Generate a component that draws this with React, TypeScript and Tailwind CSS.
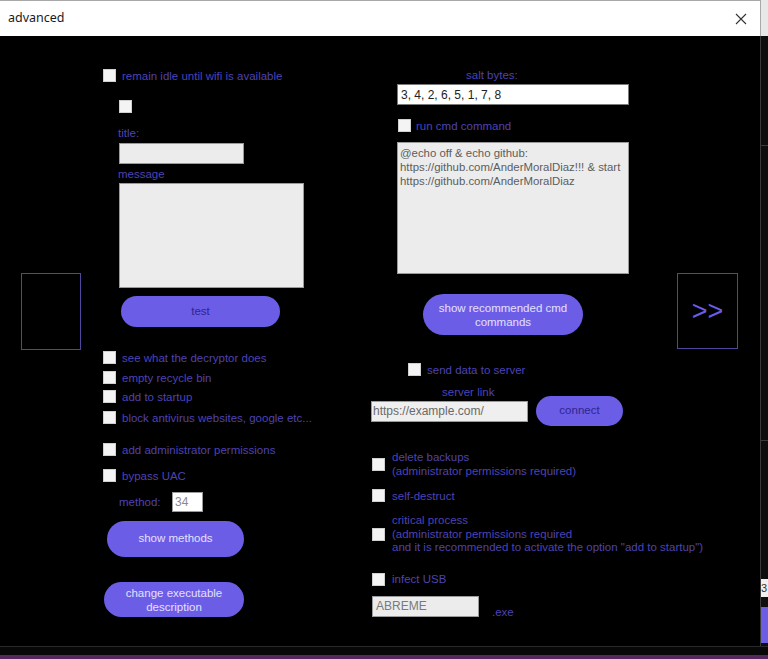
import React from "react";

function Check() {
  return <div className="w-[13px] h-[13px] bg-[#f4f4f4] border border-[#cfcfcf] shrink-0" />;
}

export default function App() {
  return (
    <div className="w-[768px] h-[659px] flex flex-col bg-[#0c0c0c] overflow-hidden font-['Liberation_Sans',Arial,sans-serif] text-[11.5px] text-[#4e43b4]">
      <div className="flex flex-row h-[646px]">
        {/* dialog */}
        <div className="w-[761px] flex flex-col">
          <div className="h-[36px] bg-white border-t border-r border-[#a9a9a9] flex items-center justify-between pl-[8px] pr-[13px]">
            <span className="font-['Noto_Sans',sans-serif] text-[12.5px] text-[#1a1a1a]">advanced</span>
            <svg width="12" height="12" viewBox="0 0 12 12" className="mt-[1px]">
              <path d="M1 1 L11 11 M11 1 L1 11" stroke="#333" strokeWidth="1.1" fill="none" />
            </svg>
          </div>
          <div className="flex-1 bg-black flex flex-row border-r border-[#3a3a3a]">
            {/* col A */}
            <div className="w-[81px] pl-[21px] pt-[237px] shrink-0">
              <div className="w-[60px] h-[77px] border border-[#51459e]" />
            </div>
            {/* col B */}
            <div className="w-[290px] pl-[22px] shrink-0 flex flex-col items-start">
              <div className="mt-[33px] flex items-center gap-[6px] h-[13px]">
                <Check />
                <span className="leading-[14px] whitespace-nowrap">remain idle until wifi is available</span>
              </div>
              <div className="mt-[18px] ml-[16px]">
                <Check />
              </div>
              <div className="mt-[13px] ml-[15px] h-[14px] leading-[14px]">title:</div>
              <div className="mt-[3px] ml-[16px] w-[125px] h-[21px] bg-[#ececec] border border-[#9a9a9a]" />
              <div className="mt-[3px] ml-[15px] h-[14px] leading-[14px]">message</div>
              <div className="mt-[2px] ml-[16px] w-[185px] h-[105px] bg-[#ececec] border border-[#9a9a9a]" />
              <div className="mt-[8px] ml-[18px] w-[159px] h-[31px] rounded-full bg-[#6b5de6] text-[#2f2590] flex items-center justify-center">
                test
              </div>
              <div className="mt-[24px] flex items-center gap-[6px] h-[13px]">
                <Check />
                <span className="leading-[14px] whitespace-nowrap">see what the decryptor does</span>
              </div>
              <div className="mt-[7px] flex items-center gap-[6px] h-[13px]">
                <Check />
                <span className="leading-[14px] whitespace-nowrap">empty recycle bin</span>
              </div>
              <div className="mt-[6px] flex items-center gap-[6px] h-[13px]">
                <Check />
                <span className="leading-[14px] whitespace-nowrap">add to startup</span>
              </div>
              <div className="mt-[8px] flex items-center gap-[6px] h-[13px]">
                <Check />
                <span className="leading-[14px] whitespace-nowrap">block antivirus websites, google etc...</span>
              </div>
              <div className="mt-[19px] flex items-center gap-[6px] h-[13px]">
                <Check />
                <span className="leading-[14px] whitespace-nowrap">add administrator permissions</span>
              </div>
              <div className="mt-[13px] flex items-center gap-[6px] h-[13px]">
                <Check />
                <span className="leading-[14px] whitespace-nowrap">bypass UAC</span>
              </div>
              <div className="mt-[10px] ml-[16px] h-[20px] flex items-center">
                <span className="w-[53px] leading-[14px]">method:</span>
                <div className="w-[31px] h-[20px] bg-white border border-[#9a9a9a] flex items-center pl-[2px] text-[12px] text-[#8a8a8a]">
                  34
                </div>
              </div>
              <div className="mt-[9px] ml-[4px] w-[137px] h-[36px] rounded-full bg-[#6b5de6] text-[#e4e0ff] flex items-center justify-center">
                show methods
              </div>
              <div className="mt-[25px] ml-[1px] w-[140px] h-[35px] rounded-full bg-[#6b5de6] text-[#e4e0ff] flex flex-col items-center justify-center leading-[14px] text-center">
                <span>change executable</span>
                <span>description</span>
              </div>
            </div>
            {/* col C */}
            <div className="w-[306px] shrink-0 flex flex-col items-start">
              <div className="mt-[32px] ml-[95px] h-[14px] leading-[14px]">salt bytes:</div>
              <div className="mt-[2px] ml-[26px] w-[232px] h-[21px] bg-white border border-[#7a7a7a] flex items-center pl-[3px] text-[12px] text-[#222]">
                3, 4, 2, 6, 5, 1, 7, 8
              </div>
              <div className="mt-[14px] ml-[27px] flex items-center gap-[5px] h-[13px]">
                <Check />
                <span className="leading-[14px] whitespace-nowrap">run cmd command</span>
              </div>
              <div className="mt-[10px] ml-[26px] w-[232px] h-[132px] bg-[#ececec] border border-[#9a9a9a] px-[2px] pt-[3px] text-[11.4px] leading-[14px] text-[#5d5d5d] whitespace-nowrap overflow-hidden">
                <div>@echo off &amp; echo github:</div>
                <div>https://github.com/AnderMoralDiaz!!! &amp; start</div>
                <div>https://github.com/AnderMoralDiaz</div>
              </div>
              <div className="mt-[20px] ml-[52px] w-[160px] h-[41px] rounded-full bg-[#6b5de6] text-[#e4e0ff] flex flex-col items-center justify-center leading-[14px] text-center">
                <span>show recommended cmd</span>
                <span>commands</span>
              </div>
              <div className="mt-[28px] ml-[37px] flex items-center gap-[6px] h-[13px]">
                <Check />
                <span className="leading-[14px] whitespace-nowrap">send data to server</span>
              </div>
              <div className="mt-[9px] ml-[71px] h-[14px] leading-[14px]">server link</div>
              <div className="mt-[-3px] flex items-center h-[30px] gap-[8px]">
                <div className="w-[157px] h-[21px] bg-[#efefef] border border-[#9a9a9a] flex items-center pl-[1px] text-[12px] text-[#6a6a6a] whitespace-nowrap overflow-hidden">
                  https://example.com/
                </div>
                <div className="w-[87px] h-[30px] rounded-full bg-[#6b5de6] text-[#2f2590] flex items-center justify-center">
                  connect
                </div>
              </div>
              <div className="mt-[24px] ml-[1px] flex items-center gap-[7px]">
                <Check />
                <div className="leading-[14px] whitespace-nowrap">
                  <div>delete backups</div>
                  <div>(administrator permissions required)</div>
                </div>
              </div>
              <div className="mt-[11px] ml-[1px] flex items-center gap-[7px] h-[13px]">
                <Check />
                <span className="leading-[14px] whitespace-nowrap">self-destruct</span>
              </div>
              <div className="mt-[12px] ml-[1px] flex items-center gap-[7px]">
                <Check />
                <div className="leading-[13.5px] whitespace-nowrap">
                  <div>critical process</div>
                  <div>(administrator permissions required</div>
                  <div>and it is recommended to activate the option "add to startup")</div>
                </div>
              </div>
              <div className="mt-[18px] ml-[1px] flex items-center gap-[7px] h-[13px]">
                <Check />
                <span className="leading-[14px] whitespace-nowrap">infect USB</span>
              </div>
              <div className="mt-[10px] ml-[1px] flex items-end">
                <div className="w-[107px] h-[21px] bg-[#ececec] border border-[#9a9a9a] flex items-center pl-[3px] text-[12px] text-[#7a7a7a]">
                  ABREME
                </div>
                <span className="ml-[13px] mb-[-2px] leading-[14px]">.exe</span>
              </div>
            </div>
            {/* col D */}
            <div className="pt-[237px] shrink-0">
              <div className="w-[61px] h-[76px] border border-[#51459e] flex items-center justify-center text-[27px] leading-none text-[#6b5de6]">
                &gt;&gt;
              </div>
            </div>
          </div>
        </div>
        {/* right strip (window behind) */}
        <div className="w-[7px] flex flex-col">
          <div className="h-[36px] bg-[#e8e8e8]" />
          <div className="flex-1 bg-[#0e0e0e] flex flex-col">
            <div className="h-[109px]" />
            <div className="h-[1px] bg-[#3a3a3a]" />
            <div className="h-[294px]" />
            <div className="h-[1px] bg-[#3a3a3a]" />
            <div className="h-[138px]" />
            <div className="h-[18px] bg-[#f0f0f0] text-[11px] leading-[18px] text-[#333] overflow-hidden">3</div>
            <div className="h-[10px]" />
            <div className="h-[36px] bg-[#6b5de6]" />
          </div>
        </div>
      </div>
      <div className="h-[9px] bg-[#080808] border-t border-[#2a2a2a]" />
      <div className="h-[4px] bg-[#57285c]" />
    </div>
  );
}
